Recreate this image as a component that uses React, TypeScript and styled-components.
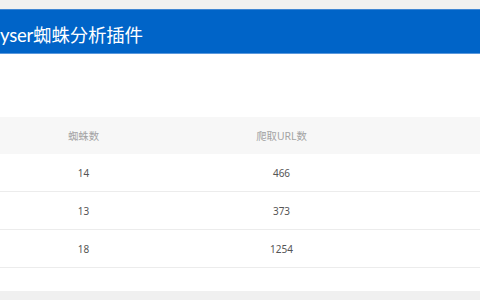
import React, { useLayoutEffect, useRef, useState } from "react";
import styled, { createGlobalStyle } from "styled-components";

const Global = createGlobalStyle`
  html, body { margin: 0; padding: 0; background: #f0f0f0; }
  body { font-family: "Noto Sans", "Noto Sans CJK SC", sans-serif; }
`;

const Page = styled.div`
  width: 480px;
  height: 300px;
  overflow: hidden;
  background: #f0f0f0;
  padding-top: 9px;
  box-sizing: border-box;
  display: flex;
  flex-direction: column;
`;

const Header = styled.header`
  height: 45px;
  flex: none;
  background: #0064c8;
  border-top: 1px solid #3f86d3;
  border-bottom: 1px solid #5a98dc;
  box-sizing: border-box;
  display: flex;
  align-items: center;
  overflow: hidden;
  padding-top: 4px;
`;

const Title = styled.h1`
  margin: 0;
  font-family: Lato, "Noto Sans CJK SC", sans-serif;
  font-size: 18.5px;
  font-weight: 400;
  color: #ffffff;
  white-space: nowrap;
  letter-spacing: -0.2px;
`;

const Content = styled.main`
  background: #ffffff;
  padding-top: 63px;
  padding-bottom: 23px;
  flex: none;
`;

const Table = styled.div`
  display: grid;
  grid-template-columns: 167px 229px 1fr;
`;

const HeadCell = styled.div`
  height: 37px;
  background: #f7f7f7;
  display: flex;
  align-items: center;
  justify-content: center;
  font-size: 10.4px;
  color: #a3a3a3;
`;

const Cell = styled.div`
  height: 37px;
  border-bottom: 1px solid #ececec;
  display: flex;
  align-items: center;
  justify-content: center;
  font-size: 10px;
  color: #555555;
`;

const rows = [
  { spiders: 14, urls: 466 },
  { spiders: 13, urls: 373 },
  { spiders: 18, urls: 1254 },
];

export default function App() {
  const prefixRef = useRef<HTMLSpanElement>(null);
  const [shift, setShift] = useState(0);

  useLayoutEffect(() => {
    if (prefixRef.current) {
      setShift(prefixRef.current.getBoundingClientRect().width);
    }
  }, []);

  return (
    <>
      <Global />
      <Page>
        <Header>
          <Title style={{ marginLeft: -shift }}>
            <span ref={prefixRef}>Spider Anal</span>yser蜘蛛分析插件
          </Title>
        </Header>
        <Content>
          <Table>
            <HeadCell>蜘蛛数</HeadCell>
            <HeadCell>爬取URL数</HeadCell>
            <HeadCell />
            {rows.map((r, i) => (
              <React.Fragment key={i}>
                <Cell>{r.spiders}</Cell>
                <Cell>{r.urls}</Cell>
                <Cell />
              </React.Fragment>
            ))}
          </Table>
        </Content>
      </Page>
    </>
  );
}
